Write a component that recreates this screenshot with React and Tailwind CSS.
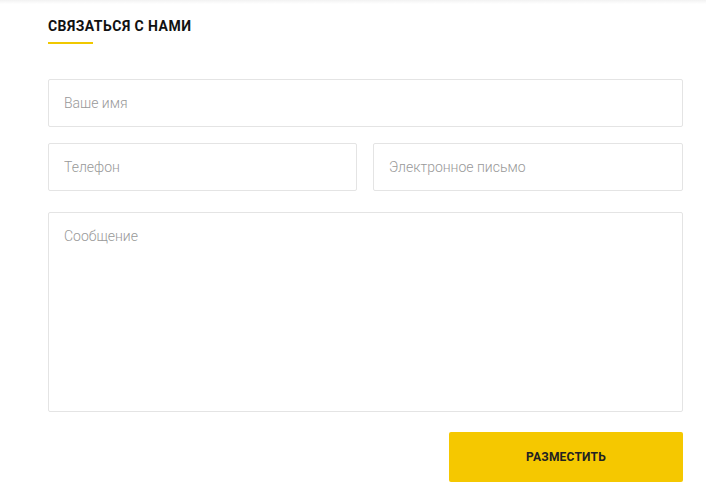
import React from 'react';

const App = () => {
  return (
    <div className="w-[706px] h-[497px] bg-white" style={{ fontFamily: 'Roboto, "Liberation Sans", sans-serif' }}>
      <div className="h-[4px] bg-gradient-to-b from-[#f2f2f2] to-white" />
      <div className="ml-12 w-[635px] pt-[12px]">
        {/* Heading */}
        <h2 className="text-[14px] leading-[20px] font-bold text-[#111] tracking-[0.45px]">СВЯЗАТЬСЯ С НАМИ</h2>
        <div className="mt-[6px] w-[45px] h-[2px] bg-[#f0c800]" />

        {/* Form */}
        <form className="mt-[35px] flex flex-col">
          <input
            type="text"
            placeholder="Ваше имя"
            className="h-[48px] w-full border border-[#e4e4e4] rounded-[2px] px-[15px] text-[14px] font-light text-[#333] placeholder:text-[#999] outline-none"
          />
          <div className="mt-[16px] grid grid-cols-[309px_1fr] gap-[16px]">
            <input
              type="text"
              placeholder="Телефон"
              className="h-[48px] w-full border border-[#e4e4e4] rounded-[2px] px-[15px] text-[14px] font-light text-[#333] placeholder:text-[#999] outline-none"
            />
            <input
              type="email"
              placeholder="Электронное письмо"
              className="h-[48px] w-full border border-[#e4e4e4] rounded-[2px] px-[15px] text-[14px] font-light text-[#333] placeholder:text-[#999] outline-none"
            />
          </div>
          <textarea
            placeholder="Сообщение"
            className="mt-[21px] h-[200px] w-full resize-none border border-[#e4e4e4] rounded-[2px] px-[15px] pt-[13px] pb-[15px] text-[14px] leading-[20px] font-light text-[#333] placeholder:text-[#999] outline-none"
          />
          <div className="mt-[20px] flex justify-end">
            <button
              type="button"
              className="w-[234px] h-[50px] bg-[#f5c800] rounded-[2px] text-[12px] font-bold text-[#222] tracking-[0.2px]"
            >
              РАЗМЕСТИТЬ
            </button>
          </div>
        </form>
      </div>
    </div>
  );
};

export default App;
